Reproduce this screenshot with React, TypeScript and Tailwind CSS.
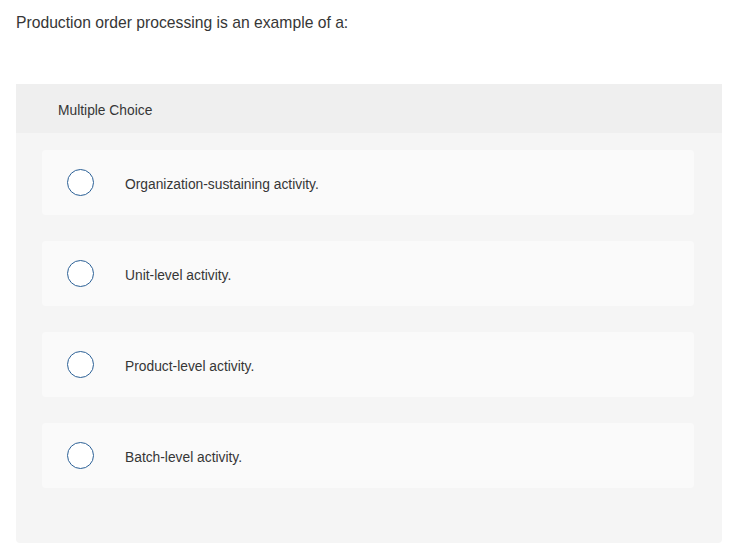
const options = [
  "Organization-sustaining activity.",
  "Unit-level activity.",
  "Product-level activity.",
  "Batch-level activity.",
];

export default function App() {
  return (
    <div className="h-[555px] w-[748px] bg-white pl-4 pt-[13px] font-['Liberation_Sans',Arial,sans-serif] text-[#363636]">
      <p className="text-[15.7px] leading-[20px]">Production order processing is an example of a:</p>
      <div className="mt-[51px] w-[706px] overflow-hidden rounded-b bg-[#f5f5f5]">
        <div className="flex h-[49px] items-center bg-[#efefef] pl-[42px] pt-[5px] text-[13.8px]">Multiple Choice</div>
        <div className="flex flex-col gap-[26px] pb-[55px] pl-[26px] pr-[28px] pt-[17px]">
          {options.map((o) => (
            <div key={o} className="flex h-[65px] items-center rounded bg-[#fafafa] pl-[25px]">
              <span className="h-[27px] w-[27px] shrink-0 rounded-full border-[1.5px] border-[#2b6096] bg-white" />
              <span className="ml-[31px] mt-[5px] text-[13.8px]">{o}</span>
            </div>
          ))}
        </div>
      </div>
    </div>
  );
}
